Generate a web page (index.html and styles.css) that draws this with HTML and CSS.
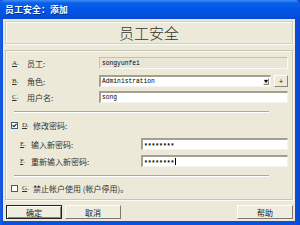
FILE: index.html
```html
<!DOCTYPE html>
<html lang="zh-CN">
<head>
<meta charset="utf-8">
<title>员工安全：添加</title>
<link rel="stylesheet" href="styles.css">
</head>
<body>
<div class="window">
  <div class="titlebar"><span class="title">员工安全：添加</span></div>
  <div class="client">
    <div class="header">员工安全</div>
    <div class="panel">
      <div class="row r-a">
        <span class="key"><u>A</u>.</span><span class="lbl">员工:</span>
        <div class="field readonly">songyunfei</div>
      </div>
      <div class="row r-b">
        <span class="key"><u>B</u>.</span><span class="lbl">角色:</span>
        <div class="select">
          <span class="val">Administration</span>
          <span class="drop"><svg width="4" height="3" viewBox="0 0 4 3"><path d="M0 0H4L2 3Z" fill="#000"/></svg></span>
        </div>
        <div class="plus">+</div>
      </div>
      <div class="row r-c">
        <span class="key"><u>C</u>.</span><span class="lbl">用户名:</span>
        <div class="field">song</div>
      </div>
      <div class="sep"></div>
      <div class="row r-d">
        <span class="check checked"><svg width="5" height="5" viewBox="0 0 5 5"><path d="M0.5 2.2L2 3.7L4.6 0.8" fill="none" stroke="#222" stroke-width="1.2"/></svg></span>
        <span class="key k-small"><u>D</u>.</span><span class="lbl">修改密码:</span>
      </div>
      <div class="row r-e">
        <span class="key k-small k-ind"><u>E</u>.</span><span class="lbl lbl-wide">输入新密码:</span>
        <div class="field pw"><span class="stars">********</span></div>
      </div>
      <div class="row r-f">
        <span class="key k-small k-ind"><u>F</u>.</span><span class="lbl lbl-wide">重新输入新密码:</span>
        <div class="field pw"><span class="stars">********</span><span class="caret"></span></div>
      </div>
      <div class="sep"></div>
      <div class="row r-g">
        <span class="check"></span>
        <span class="key k-small"><u>G</u>.</span><span class="lbl">禁止帐户使用 (帐户停用)。</span>
      </div>
    </div>
    <div class="buttons">
      <div class="btn default">确定</div>
      <div class="btn">取消</div>
      <div class="spacer"></div>
      <div class="btn">帮助</div>
    </div>
  </div>
</div>
</body>
</html>
```

FILE: styles.css
```css
html, body {
  margin: 0;
  padding: 0;
}
body {
  width: 300px;
  height: 225px;
  overflow: hidden;
  background: #0b4fe0;
  font-family: "Noto Sans CJK SC", "DejaVu Sans", sans-serif;
  font-size: 8px;
  color: #222;
}
.window {
  display: flex;
  flex-direction: column;
  height: 225px;
  background: linear-gradient(to right, #1a5de6 0, #0b4fe0 3px, #0b4fe0 295px, #0a45cf 300px);
}
.titlebar {
  height: 19px;
  flex: none;
  display: flex;
  align-items: center;
  padding-left: 5px;
  background: linear-gradient(to bottom, #3d8cf7 0, #0a5fea 3px, #0257e6 9px, #0451de 15px, #0448d4 19px);
  border-radius: 5px 5px 0 0;
}
.title {
  color: #fff;
  font-weight: bold;
  font-size: 8.8px;
  letter-spacing: 0.2px;
  text-shadow: 1px 1px 0 #0a2e8a;
}
.client {
  flex: 1;
  margin: 0 5px 4px 3px;
  background: #ece9d8;
  padding: 2px 2px 0 2px;
  display: flex;
  flex-direction: column;
}
.header {
  height: 23px;
  box-sizing: border-box;
  border: 1px solid #d2cebe;
  box-shadow: inset 1px 1px 0 #fbfaf6, 1px 1px 0 #fbfaf6;
  display: flex;
  align-items: center;
  justify-content: center;
  font-size: 15px;
  font-weight: 300;
  color: #333;
}
.panel {
  margin-top: 6px;
  height: 150px;
  box-sizing: border-box;
  border: 1px solid #c9c5b4;
  box-shadow: inset 1px 1px 0 #fbfaf6, 1px 1px 0 #fbfaf6;
  padding: 6px 4px 0 6px;
  display: flex;
  flex-direction: column;
}
.row {
  display: flex;
  align-items: center;
  height: 12px;
  flex: none;
}
.r-b { margin-top: 6px; }
.r-c { margin-top: 4px; }
.r-d { margin-top: 6px; }
.r-e { margin-top: 7px; }
.r-f { margin-top: 5px; }
.r-g { margin-top: 5px; }
.key {
  width: 15px;
  flex: none;
  font-family: "Liberation Serif", serif;
  font-size: 7px;
  color: #333;
}
.key u {
  text-underline-offset: 1px;
}
.k-small {
  width: 11px;
}
.k-ind {
  margin-left: 8px;
}
.lbl {
  width: 72px;
  flex: none;
  white-space: nowrap;
  color: #333;
}
.lbl-wide {
  width: 110px;
}
.field {
  flex: none;
  width: 189px;
  height: 12px;
  box-sizing: border-box;
  background: #fff;
  border-style: solid;
  border-width: 2px 1px 1px 2px;
  border-color: #a3a091 #f4f3ee #f4f3ee #a3a091;
  font-family: "Liberation Mono", monospace;
  font-size: 6.3px;
  line-height: 9px;
  padding-left: 1px;
  color: #000;
  display: flex;
  align-items: center;
}
.field.readonly {
  background: #e9e6d7;
  border-width: 1px;
  border-color: #c6c2b2 #fbfaf6 #fbfaf6 #c6c2b2;
  padding-left: 2px;
}
.field.pw {
  width: 147px;
}
.stars {
  position: relative;
  top: 2px;
  font-weight: bold;
}
.caret {
  display: inline-block;
  width: 1px;
  height: 7px;
  background: #000;
  margin-left: 1px;
}
.select {
  flex: none;
  width: 172px;
  height: 12px;
  box-sizing: border-box;
  background: #fff;
  border-style: solid;
  border-width: 2px 1px 1px 2px;
  border-color: #a3a091 #f4f3ee #f4f3ee #a3a091;
  display: flex;
  align-items: center;
  font-family: "Liberation Mono", monospace;
  font-size: 6.3px;
  padding-left: 1px;
  color: #000;
}
.val {
  flex: 1;
}
.drop {
  width: 6px;
  height: 7px;
  margin-right: 1px;
  background: #e4e1d2;
  border: 1px solid;
  border-color: #fff #8a877a #8a877a #fff;
  box-sizing: border-box;
  display: flex;
  align-items: center;
  justify-content: center;
}
.plus {
  flex: none;
  width: 14px;
  height: 12px;
  margin-left: 3px;
  box-sizing: border-box;
  border: 1px solid;
  border-color: #fff #8a877a #8a877a #fff;
  background: #ece9d8;
  display: flex;
  align-items: center;
  justify-content: center;
  font-family: "Liberation Sans", sans-serif;
  font-size: 7px;
  color: #111;
}
.sep {
  flex: none;
  margin: 8px 19px 0 2px;
  height: 1px;
  background: #aca899;
  border-bottom: 1px solid #fff;
}
.check {
  flex: none;
  width: 7px;
  height: 7px;
  box-sizing: border-box;
  margin-left: -1px;
  margin-right: 4px;
  border: 1px solid #3c5c8c;
  background: #fff;
  display: flex;
  align-items: center;
  justify-content: center;
}
.buttons {
  margin-top: 5px;
  display: flex;
  height: 14px;
  padding-left: 1px;
}
.btn {
  width: 56px;
  height: 14px;
  box-sizing: border-box;
  border: 1px solid;
  border-color: #fff #7d7a6e #7d7a6e #fff;
  background: #efede0;
  display: flex;
  align-items: center;
  justify-content: center;
  color: #222;
  margin-right: 3px;
}
.btn.default {
  border: 1px solid #222;
  box-shadow: inset 1px 1px 0 #fff, inset -1px -1px 0 #8a877a;
}
.spacer {
  flex: 1;
}
.buttons .btn:last-child {
  margin-right: 0;
}
```
